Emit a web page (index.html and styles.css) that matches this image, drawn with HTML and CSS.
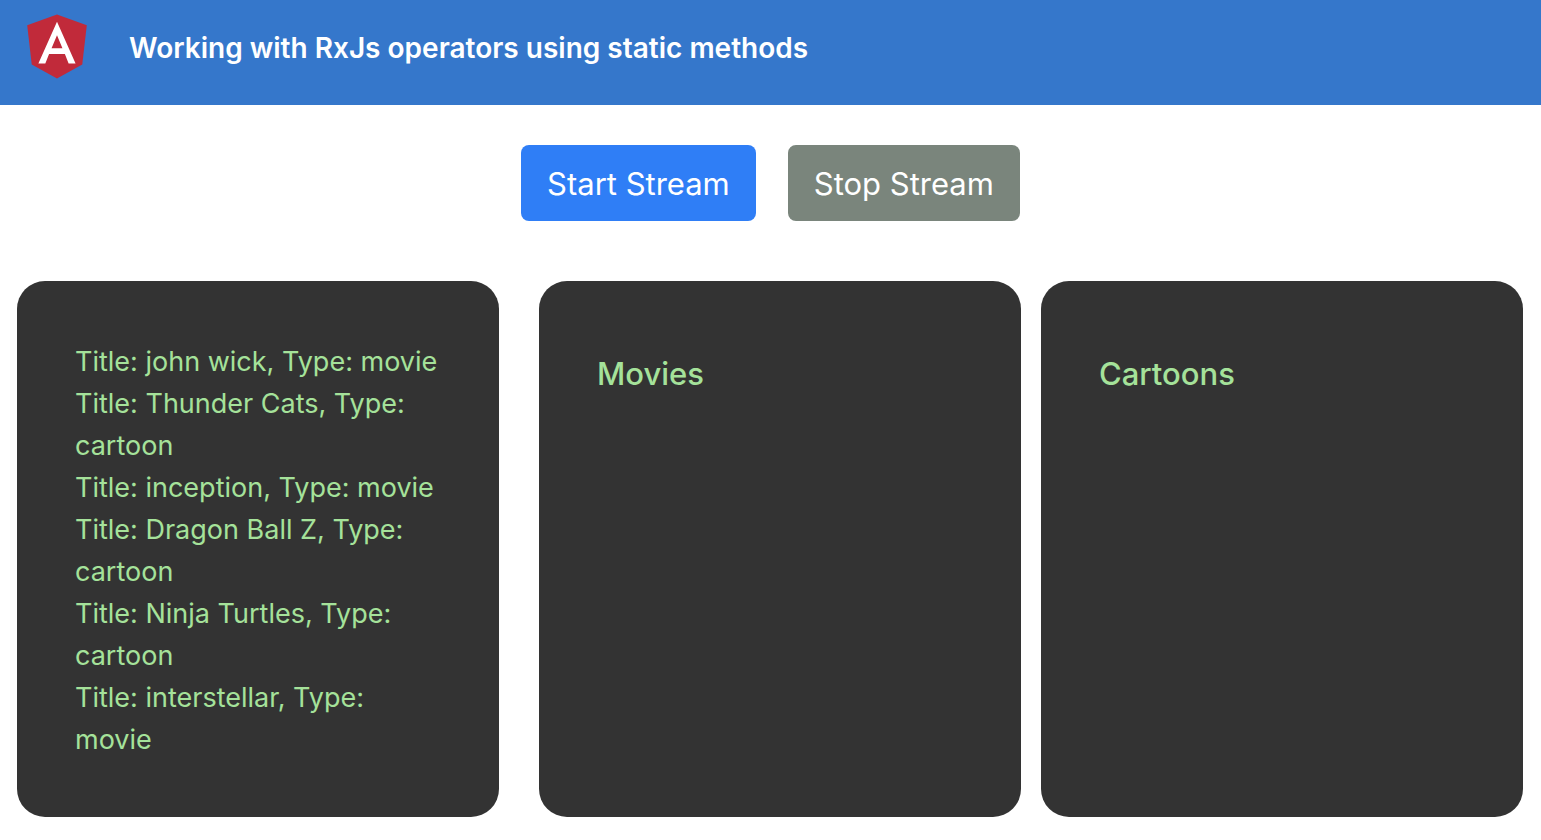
FILE: index.html
```html
<!DOCTYPE html>
<html lang="en">
<head>
<meta charset="utf-8">
<meta name="viewport" content="width=device-width, initial-scale=1">
<title>RxJs operators</title>
<link rel="stylesheet" href="styles.css">
</head>
<body>
<header class="toolbar">
  <svg class="logo" viewBox="0 0 250 250" role="img" aria-label="Angular logo">
    <path fill="#c12a3a" d="M125 30L31.900 63.200l14.200 123.100L125 230l78.900-43.700 14.200-123.100z"/>
    <path fill="#fff" d="M125 52.100L66.800 182.600h21.700l11.700-29.200h49.400l11.700 29.200H183L125 52.100zm17 83.300h-34l17-40.900z"/>
  </svg>
  <h1 class="toolbar-title">Working with RxJs operators using static methods</h1>
</header>
<main>
  <div class="actions">
    <button class="btn btn-start" type="button">Start Stream</button>
    <button class="btn btn-stop" type="button">Stop Stream</button>
  </div>
  <div class="panels">
    <section class="panel">
      <ul class="stream">
        <li>Title: john wick, Type: movie</li>
        <li>Title: Thunder Cats, Type: cartoon</li>
        <li>Title: inception, Type: movie</li>
        <li>Title: Dragon Ball Z, Type: cartoon</li>
        <li>Title: Ninja Turtles, Type: cartoon</li>
        <li>Title: interstellar, Type: movie</li>
      </ul>
    </section>
    <div class="results">
      <section class="panel"><h2 class="panel-title">Movies</h2></section>
      <section class="panel"><h2 class="panel-title">Cartoons</h2></section>
    </div>
  </div>
</main>
</body>
</html>
```

FILE: styles.css
```css
* {
  box-sizing: border-box;
}

body {
  margin: 0;
  background: #fff;
  font-family: Inter, "Liberation Sans", sans-serif;
  font-size: 27px;
  line-height: 42px;
}

.toolbar {
  display: flex;
  align-items: flex-start;
  gap: 32px;
  padding: 5px 17px 20px;
  background: #3577cb;
}

.logo {
  display: block;
  flex: none;
  width: 80px;
  height: 80px;
}

.toolbar-title {
  margin: 0;
  padding-top: 22px;
  color: #fff;
  font-size: 28px;
  font-weight: 600;
}

.actions {
  display: flex;
  justify-content: center;
  gap: 32px;
  padding: 40px 16px 60px;
}

.btn {
  padding: 15px 26px 13px;
  border: 0;
  border-radius: 8px;
  color: #fff;
  font-family: inherit;
  font-size: 31px;
  line-height: 48px;
}

.btn-start {
  background: #2f7ef6;
}

.btn-stop {
  background: #7a857c;
}

/* Three equal panels; the source panel stands further from the results. */
.panels {
  display: grid;
  grid-template-columns: calc((100% - 60px) / 3) 1fr;
  gap: 40px;
  padding: 0 18px 20px 17px;
}

.results {
  display: grid;
  grid-template-columns: 1fr 1fr;
  gap: 20px;
}

.panel {
  min-width: 0;
  padding: 60px 58px 56px;
  border-radius: 28px;
  background: #333;
  color: #a5e29a;
}

.stream {
  margin: 0;
  padding: 0;
  list-style: none;
}

.panel-title {
  margin: 0;
  padding-top: 14px;
  font-size: 31px;
  font-weight: 500;
  line-height: 38px;
}
```
